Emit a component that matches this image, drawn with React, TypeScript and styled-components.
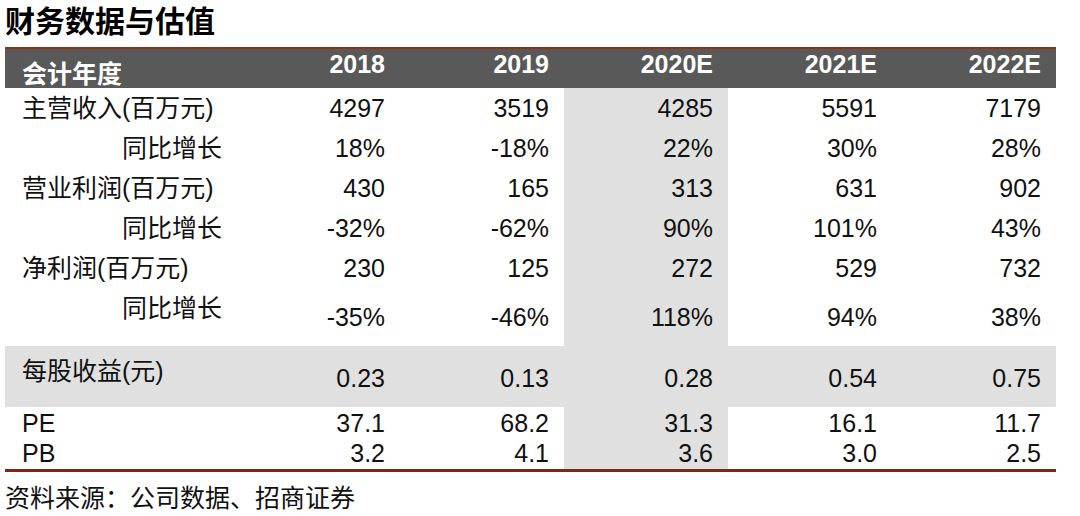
import React from 'react';
import styled, { createGlobalStyle } from 'styled-components';

type RowKind = 'normal' | 'tall' | 'eps' | 'compact';

interface RowData {
  label: string;
  indent?: boolean;
  values: string[];
  kind: RowKind;
  height: number;
}

const years = ['2018', '2019', '2020E', '2021E', '2022E'];
const highlightCol = 2;

const rows: RowData[] = [
  { label: '主营收入(百万元)', values: ['4297', '3519', '4285', '5591', '7179'], kind: 'normal', height: 40 },
  { label: '同比增长', indent: true, values: ['18%', '-18%', '22%', '30%', '28%'], kind: 'normal', height: 40 },
  { label: '营业利润(百万元)', values: ['430', '165', '313', '631', '902'], kind: 'normal', height: 40 },
  { label: '同比增长', indent: true, values: ['-32%', '-62%', '90%', '101%', '43%'], kind: 'normal', height: 40 },
  { label: '净利润(百万元)', values: ['230', '125', '272', '529', '732'], kind: 'normal', height: 40 },
  { label: '同比增长', indent: true, values: ['-35%', '-46%', '118%', '94%', '38%'], kind: 'tall', height: 58 },
  { label: '每股收益(元)', values: ['0.23', '0.13', '0.28', '0.54', '0.75'], kind: 'eps', height: 61 },
  { label: 'PE', values: ['37.1', '68.2', '31.3', '16.1', '11.7'], kind: 'compact', height: 31 },
  { label: 'PB', values: ['3.2', '4.1', '3.6', '3.0', '2.5'], kind: 'compact', height: 32 },
];

const App = () => (
  <Page>
    <GlobalStyle />
    <Title>财务数据与估值</Title>
    <Table>
      <colgroup>
        <col style={{ width: 231 }} />
        {years.map((y) => (
          <col key={y} style={{ width: 164 }} />
        ))}
      </colgroup>
      <thead>
        <tr>
          <HeadLabel>会计年度</HeadLabel>
          {years.map((y) => (
            <HeadYear key={y}>{y}</HeadYear>
          ))}
        </tr>
      </thead>
      <tbody>
        {rows.map((row, i) => (
          <BodyRow key={i} $h={row.height} $shade={row.kind === 'eps'} $last={i === rows.length - 1}>
            <Label $indent={!!row.indent} $kind={row.kind}>
              {row.label}
            </Label>
            {row.values.map((v, j) => (
              <Value key={j} $kind={row.kind} $highlight={j === highlightCol}>
                {v}
              </Value>
            ))}
          </BodyRow>
        ))}
      </tbody>
    </Table>
    <Source>资料来源：公司数据、招商证券</Source>
  </Page>
);

const GlobalStyle = createGlobalStyle`
  body {
    margin: 0;
    background: #ffffff;
    font-family: "Liberation Sans", "Noto Sans CJK SC", sans-serif;
    color: #111111;
  }
`;

const Page = styled.div`
  padding-left: 5px;
  width: 1051px;
`;

const Title = styled.h1`
  margin: 0;
  padding-top: 4px;
  height: 43px;
  font-size: 30px;
  line-height: 36px;
  font-weight: bold;
  color: #000000;
`;

const Table = styled.table`
  width: 1051px;
  border-collapse: collapse;
  table-layout: fixed;
  font-size: 25px;
  line-height: 28px;
`;

const HeadCell = styled.th`
  height: 38px;
  padding: 0 15px 0 0;
  background: #595959;
  border-top: 2px solid #8b3418;
  color: #ffffff;
  font-weight: bold;
  text-align: right;
`;

const HeadLabel = styled(HeadCell)`
  text-align: left;
  padding-left: 17px;
  vertical-align: bottom;
`;

const HeadYear = styled(HeadCell)`
  vertical-align: top;
  padding-top: 1px;
`;

const BodyRow = styled.tr<{ $h: number; $shade: boolean; $last: boolean }>`
  height: ${(p) => p.$h}px;
  background: ${(p) => (p.$shade ? '#e0e0e0' : 'transparent')};
  border-bottom: ${(p) => (p.$last ? '3px solid #7b2a0e' : 'none')};
`;

const Label = styled.td<{ $indent: boolean; $kind: RowKind }>`
  padding: 0 0 0 ${(p) => (p.$indent ? 117 : 17)}px;
  padding-top: ${(p) => (p.$kind === 'tall' ? 6 : p.$kind === 'eps' ? 11 : 0)}px;
  vertical-align: ${(p) => (p.$kind === 'tall' || p.$kind === 'eps' ? 'top' : 'middle')};
  white-space: nowrap;
`;

const Value = styled.td<{ $kind: RowKind; $highlight: boolean }>`
  padding: 0 15px 0 0;
  padding-bottom: ${(p) => (p.$kind === 'tall' || p.$kind === 'eps' ? 15 : 0)}px;
  text-align: right;
  vertical-align: ${(p) => (p.$kind === 'tall' || p.$kind === 'eps' ? 'bottom' : 'middle')};
  background: ${(p) => (p.$highlight ? '#e0e0e0' : 'transparent')};
`;

const Source = styled.div`
  margin-top: 11px;
  font-size: 25px;
  line-height: 30px;
  color: #111111;
`;

export default App;
